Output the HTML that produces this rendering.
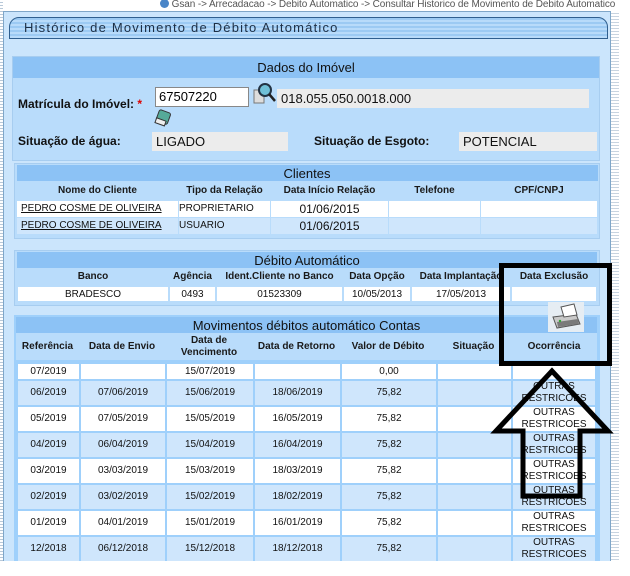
<!DOCTYPE html>
<html><head><meta charset="utf-8"><style>
*{margin:0;padding:0;box-sizing:border-box}
body{width:630px;height:576px;background:#fff;font-family:"Liberation Sans",sans-serif;position:relative;overflow:hidden}
.abs{position:absolute}
.crumb{left:160px;top:-1px;font-size:10px;color:#555;white-space:nowrap;letter-spacing:-0.1px}
.outer{left:3px;top:11px;width:608px;height:550px;background:#cbe5fc;border:1px solid #7fa6c8;border-bottom:none}
.stripe{left:0;top:0;width:3px;height:576px;background:repeating-linear-gradient(#fff 0 2px,#b8c8d8 2px 3px)}
.stripe2{left:611px;top:11px;width:8px;height:550px;background:repeating-linear-gradient(#fff 0 2px,#c8d4e0 2px 3px)}
.tab{left:9px;top:17px;width:599px;height:22px;border:1px solid #2f5f8f;border-radius:10px 10px 0 0;background:repeating-linear-gradient(#9ccaf3 0 2px,#b8dbfa 2px 4px);font-size:13px;letter-spacing:1.2px;color:#1d2f45;padding:2px 0 0 14px}
.sec{background:#b9dcfb;border:1px solid #a7cdf0}
.hd{background:#8cc2f5;text-align:center;font-size:13px;color:#111}
table{border-collapse:collapse;table-layout:fixed;font-family:"Liberation Sans",sans-serif;font-size:10px}
td{text-align:center;color:#111;white-space:nowrap;overflow:hidden}
.th td{font-weight:bold;font-size:10px;color:#1a1a1a}
.w{background:#fff}
.lbl{font-size:12px;font-weight:bold;color:#111}
.fld{background:#ececec;font-size:13px;color:#111;padding-left:4px}
#m td,#d td{border:2px solid #9fd0fb}
#d td{border-color:#b9dcfb}
#c td.b{border:1px solid #b9dcfb}
.r2 td{white-space:normal;line-height:12px}
</style></head><body>
<div class="abs stripe"></div>
<div class="abs crumb"><span style="display:inline-block;width:9px;height:9px;border-radius:50%;background:#4a86c8;vertical-align:-1px"></span> Gsan -&gt; Arrecadacao -&gt; Debito Automatico -&gt; Consultar Historico de Movimento de Debito Automatico</div>
<div class="abs outer"></div>
<div class="abs stripe2"></div>
<div class="abs tab">Histórico de Movimento de Débito Automático</div>

<div class="abs sec" style="left:12px;top:56px;width:588px;height:105px"></div>
<div class="abs hd" style="left:13px;top:57px;width:586px;height:21px;padding-top:3px">Dados do Imóvel</div>
<div class="abs lbl" style="left:18px;top:97px">Matrícula do Imóvel: <span style="color:#d00">*</span></div>
<div class="abs" style="left:155px;top:87px;width:94px;height:20px;background:#fff;border:1px solid #888;font-size:13px;padding:1px 3px">67507220</div>
<svg class="abs" style="left:252px;top:82px" width="26" height="24"><rect x="2" y="8" width="10" height="13" fill="#ddd" stroke="#777"/><circle cx="13" cy="8" r="6" fill="#6fc0d8" stroke="#234" stroke-width="2"/><line x1="17" y1="12" x2="23" y2="19" stroke="#222" stroke-width="2.5"/></svg>
<div class="abs fld" style="left:277px;top:89px;width:312px;height:19px;padding-top:2px">018.055.050.0018.000</div>
<svg class="abs" style="left:154px;top:109px" width="18" height="20"><rect x="3" y="2" width="12" height="12" rx="2" fill="#5a9" stroke="#333" transform="rotate(20 9 9)"/><rect x="3" y="11" width="10" height="5" fill="#eee" stroke="#333" transform="rotate(20 9 9)"/></svg>
<div class="abs lbl" style="left:18px;top:134px">Situação de água:</div>
<div class="abs fld" style="left:152px;top:132px;width:136px;height:19px;padding-top:2px">LIGADO</div>
<div class="abs lbl" style="left:314px;top:134px">Situação de Esgoto:</div>
<div class="abs fld" style="left:459px;top:132px;width:138px;height:19px;padding-top:2px">POTENCIAL</div>

<div class="abs sec" style="left:14px;top:163px;width:586px;height:76px"></div>
<table class="abs" id="c" style="left:16px;top:165px;width:582px">
<colgroup><col style="width:162px"><col style="width:92px"><col style="width:118px"><col style="width:92px"><col></colgroup>
<tr><td colspan="5" class="hd" style="height:16px">Clientes</td></tr>
<tr class="th"><td style="height:19px">Nome do Cliente</td><td>Tipo da Relação</td><td>Data Início Relação</td><td>Telefone</td><td>CPF/CNPJ</td></tr>
<tr class="w"><td class="b" style="text-align:left;text-decoration:underline;height:17px;padding-left:4px">PEDRO COSME DE OLIVEIRA</td><td class="b" style="text-align:left">PROPRIETARIO</td><td class="b" style="font-size:12px">01/06/2015</td><td class="b"></td><td class="b"></td></tr>
<tr style="background:#cfe6fc"><td class="b" style="text-align:left;text-decoration:underline;height:17px;padding-left:4px">PEDRO COSME DE OLIVEIRA</td><td class="b" style="text-align:left">USUARIO</td><td class="b" style="font-size:12px">01/06/2015</td><td class="b"></td><td class="b"></td></tr>
</table>

<div class="abs sec" style="left:14px;top:250px;width:586px;height:56px"></div>
<table class="abs" id="d" style="left:16px;top:252px;width:582px">
<colgroup><col style="width:152px"><col style="width:47px"><col style="width:127px"><col style="width:68px"><col style="width:100px"><col></colgroup>
<tr><td colspan="6" class="hd" style="height:16px;border:none">Débito Automático</td></tr>
<tr class="th"><td style="height:18px;border:none">Banco</td><td style="border:none">Agência</td><td style="border:none">Ident.Cliente no Banco</td><td style="border:none">Data Opção</td><td style="border:none">Data Implantação</td><td style="border:none">Data Exclusão</td></tr>
<tr class="w"><td style="height:16px">BRADESCO</td><td>0493</td><td>01523309</td><td>10/05/2013</td><td>17/05/2013</td><td></td></tr>
</table>

<div class="abs" style="left:14px;top:315px;width:586px;height:246px;background:#9fd0fb"></div>
<table class="abs" style="left:16px;top:317px;width:581px">
<colgroup><col style="width:63px"><col style="width:86px"><col style="width:88px"><col style="width:87px"><col style="width:96px"><col style="width:75px"><col></colgroup>
<tr><td colspan="7" class="hd" style="height:16px">Movimentos débitos automático Contas</td></tr>
<tr class="th" style="background:#b9dcfb"><td style="height:27px">Referência</td><td>Data de Envio</td><td style="line-height:12px">Data de<br>Vencimento</td><td>Data de Retorno</td><td>Valor de Débito</td><td>Situação</td><td>Ocorrência</td></tr>
</table>
<svg class="abs" style="left:548px;top:302px" width="36" height="30"><rect width="36" height="30" fill="#e6edf3"/><path d="M5 15 L28 12 L32 22 L9 26 Z" fill="#c9c9c9" stroke="#555"/><path d="M13 5 L26 2 L29 13 L16 15 Z" fill="#fff" stroke="#555"/><path d="M9 20 L30 17 L31 22 L10 25 Z" fill="#7a7a7a"/><circle cx="12" cy="19" r="1.2" fill="#3a3"/></svg>
<table class="abs" style="left:16px;top:362px;width:581px" id="m">
<colgroup><col style="width:63px"><col style="width:86px"><col style="width:88px"><col style="width:87px"><col style="width:96px"><col style="width:75px"><col></colgroup>
<tr class="w" style="height:17px"><td>07/2019</td><td></td><td>15/07/2019</td><td></td><td>0,00</td><td></td><td></td></tr>
<tr class="r2" style="height:25px;background:#cfe6fc"><td>06/2019</td><td>07/06/2019</td><td>15/06/2019</td><td>18/06/2019</td><td>75,82</td><td></td><td>OUTRAS<br>RESTRICOES</td></tr>
<tr class="w r2" style="height:26px"><td>05/2019</td><td>07/05/2019</td><td>15/05/2019</td><td>16/05/2019</td><td>75,82</td><td></td><td>OUTRAS<br>RESTRICOES</td></tr>
<tr class="r2" style="height:26px;background:#cfe6fc"><td>04/2019</td><td>06/04/2019</td><td>15/04/2019</td><td>16/04/2019</td><td>75,82</td><td></td><td>OUTRAS<br>RESTRICOES</td></tr>
<tr class="w r2" style="height:26px"><td>03/2019</td><td>03/03/2019</td><td>15/03/2019</td><td>18/03/2019</td><td>75,82</td><td></td><td>OUTRAS<br>RESTRICOES</td></tr>
<tr class="r2" style="height:26px;background:#cfe6fc"><td>02/2019</td><td>03/02/2019</td><td>15/02/2019</td><td>18/02/2019</td><td>75,82</td><td></td><td>OUTRAS<br>RESTRICOES</td></tr>
<tr class="w r2" style="height:26px"><td>01/2019</td><td>04/01/2019</td><td>15/01/2019</td><td>16/01/2019</td><td>75,82</td><td></td><td>OUTRAS<br>RESTRICOES</td></tr>
<tr class="r2" style="height:26px;background:#cfe6fc"><td>12/2018</td><td>06/12/2018</td><td>15/12/2018</td><td>18/12/2018</td><td>75,82</td><td></td><td>OUTRAS<br>RESTRICOES</td></tr>
</table>
<div class="abs" style="left:0;top:561px;width:630px;height:15px;background:#fff"></div>

<svg class="abs" style="left:0;top:0" width="630" height="576">
<rect x="501.5" y="265.5" width="108" height="98" fill="none" stroke="#000" stroke-width="5"/>
<polygon points="552,371 496,431 523,431 523,496 580,496 580,431 608,431" fill="none" stroke="#000" stroke-width="5"/>
</svg>
</body></html>
